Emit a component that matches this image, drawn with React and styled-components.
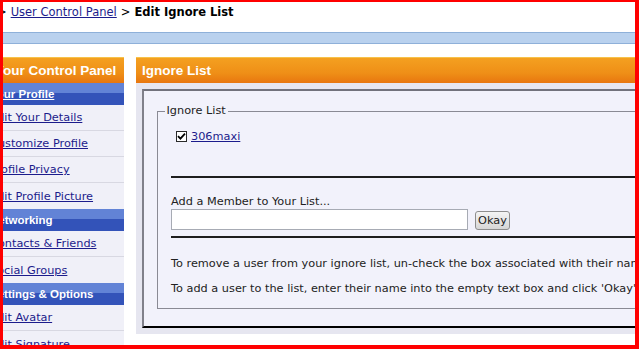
import styled, { createGlobalStyle } from 'styled-components';

const GlobalStyle = createGlobalStyle`
    html, body {
        margin: 0;
        background: #ffffff;
    }
`

const sideLinks = [
    { title: 'Your Profile', active: true, items: ['Edit Your Details', 'Customize Profile', 'Profile Privacy', 'Edit Profile Picture'] },
    { title: 'Networking', items: ['Contacts & Friends', 'Social Groups'] },
    { title: 'Settings & Options', items: ['Edit Avatar', 'Edit Signature'] },
];

export default function App() {
    return (
        <Frame>
            <GlobalStyle />
            <Page>
                <Breadcrumb>
                    <span>&gt;</span>
                    <a href="#">User Control Panel</a>
                    <span>&gt;</span>
                    <strong>Edit Ignore List</strong>
                </Breadcrumb>
                <NavStrip />
                <Columns>
                    <Sidebar>
                        <OrangeHeader $side>Your Control Panel</OrangeHeader>
                        {sideLinks.map(group => (
                            <div key={group.title}>
                                <SectionHeader $active={group.active}>{group.title}</SectionHeader>
                                {group.items.map(item => (
                                    <SideItem key={item}><a href="#">{item}</a></SideItem>
                                ))}
                            </div>
                        ))}
                    </Sidebar>
                    <Main>
                        <OrangeHeader>Ignore List</OrangeHeader>
                        <PanelBody>
                            <InsetBox>
                                <ListFieldset>
                                    <legend>Ignore List</legend>
                                    <CheckRow>
                                        <CheckBox>
                                            <svg width="9" height="9" viewBox="0 0 9 9">
                                                <path d="M1 4.2 L3.4 6.6 L8 1.6" fill="none" stroke="#000" strokeWidth="1.8" />
                                            </svg>
                                        </CheckBox>
                                        <a href="#">306maxi</a>
                                    </CheckRow>
                                    <Rule />
                                    <FieldLabel>Add a Member to Your List...</FieldLabel>
                                    <InputRow>
                                        <TextBox type="text" />
                                        <OkayButton>Okay</OkayButton>
                                    </InputRow>
                                    <Rule $gap={6} />
                                    <Hint $top={17.5}>To remove a user from your ignore list, un-check the box associated with their name and click 'Okay'.</Hint>
                                    <Hint $top={10}>To add a user to the list, enter their name into the empty text box and click 'Okay'.</Hint>
                                </ListFieldset>
                            </InsetBox>
                        </PanelBody>
                    </Main>
                </Columns>
            </Page>
        </Frame>
    )
}

const Frame = styled.div`
    width: 639px;
    height: 349px;
    box-sizing: border-box;
    border-style: solid;
    border-color: #ff0000;
    border-width: 2px 4px 4px 3px;
    overflow: hidden;
    background: #ffffff;
    font-family: "DejaVu Sans", Verdana, sans-serif;
    font-size: 11.3px;
    color: #222222;
    a {
        color: #1c1c8c;
        text-decoration: underline;
    }
`
const Page = styled.div`
    margin-left: -19px;
    width: 820px;
`
const Breadcrumb = styled.div`
    display: flex;
    align-items: center;
    gap: 4px;
    height: 30px;
    padding-left: 13px;
    box-sizing: border-box;
    padding-bottom: 10px;
    font-size: 11.5px;
    color: #000;
    strong {
        font-size: 11.5px;
        font-weight: bold;
    }
`
const NavStrip = styled.div`
    height: 10px;
    background: #b9d1ee;
    border-top: 1px solid #8eb0d9;
    border-bottom: 1px solid #8eb0d9;
    margin-bottom: 13px;
`
const Columns = styled.div`
    display: flex;
    align-items: flex-start;
    gap: 12px;
`
const Sidebar = styled.div`
    width: 140px;
    flex-shrink: 0;
    background: #f0f0f8;
`
const OrangeHeader = styled.div`
    height: 26px;
    box-sizing: border-box;
    display: flex;
    align-items: center;
    padding-left: ${p => p.$side ? '11px' : '6px'};
    border-top: 1px solid #f6c24a;
    background: linear-gradient(#f4a020, #ef8f17 60%, #e8760f);
    color: #ffffff;
    font-family: "Liberation Sans", Arial, sans-serif;
    font-weight: bold;
    font-size: 13.5px;
    white-space: nowrap;
`
const SectionHeader = styled.div`
    height: 22px;
    box-sizing: border-box;
    display: flex;
    align-items: center;
    padding-left: 6px;
    background: linear-gradient(#6283d6 0%, #6283d6 45%, #3353b9 45%, #3353b9 100%);
    color: #ffffff;
    font-family: "Liberation Sans", Arial, sans-serif;
    font-weight: bold;
    font-size: 11.5px;
    white-space: nowrap;
    text-decoration: ${p => p.$active ? 'underline' : 'none'};
`
const SideItem = styled.div`
    height: 26px;
    box-sizing: border-box;
    display: flex;
    align-items: center;
    padding-left: 6px;
    border-bottom: 1px solid #d8d8e2;
    white-space: nowrap;
    &:last-child {
        border-bottom: none;
    }
`
const Main = styled.div`
    flex: 1;
`
const PanelBody = styled.div`
    background: #e6e6f0;
    padding: 6px 0 6px 6px;
`
const InsetBox = styled.div`
    background: #f2f2fb;
    border-top: 2px solid #72727c;
    border-left: 2px solid #80808a;
    border-bottom: 2px solid #000000;
    border-right: 2px solid #000000;
    padding: 13px 0 17px 13px;
`
const ListFieldset = styled.fieldset`
    margin: 0;
    border: 1px solid #8a8a94;
    padding: 0 0 12.5px 13px;
    min-width: 0;
    legend {
        padding: 0 2px;
        margin-left: -6.5px;
        line-height: 14px;
        color: #222;
    }
`
const CheckRow = styled.div`
    display: flex;
    align-items: center;
    gap: 4px;
    height: 16px;
    margin-top: 10px;
    padding-left: 5px;
`
const CheckBox = styled.span`
    width: 11px;
    height: 11px;
    box-sizing: border-box;
    border: 1px solid #2a2a2a;
    background: #ffffff;
    display: flex;
    align-items: center;
    justify-content: center;
`
const Rule = styled.div`
    height: 2px;
    background: #1e1e1e;
    margin-top: ${p => p.$gap ?? 32}px;
`
const FieldLabel = styled.div`
    line-height: 14px;
    margin-top: 17px;
`
const InputRow = styled.div`
    display: flex;
    align-items: flex-end;
    gap: 7px;
    height: 21px;
`
const TextBox = styled.input`
    width: 297px;
    height: 21px;
    box-sizing: border-box;
    margin: 0;
    border: 1px solid #a7abb4;
    background: #ffffff;
    outline: none;
`
const OkayButton = styled.button`
    height: 19px;
    width: 35px;
    box-sizing: border-box;
    padding: 0;
    border: 1px solid #8d8d8d;
    border-radius: 3px;
    background: linear-gradient(#f4f4f4, #d6d6d6);
    font-family: "DejaVu Sans", Verdana, sans-serif;
    font-size: 11.3px;
    color: #222;
`
const Hint = styled.div`
    line-height: 15px;
    margin-top: ${p => p.$top}px;
    white-space: nowrap;
`
